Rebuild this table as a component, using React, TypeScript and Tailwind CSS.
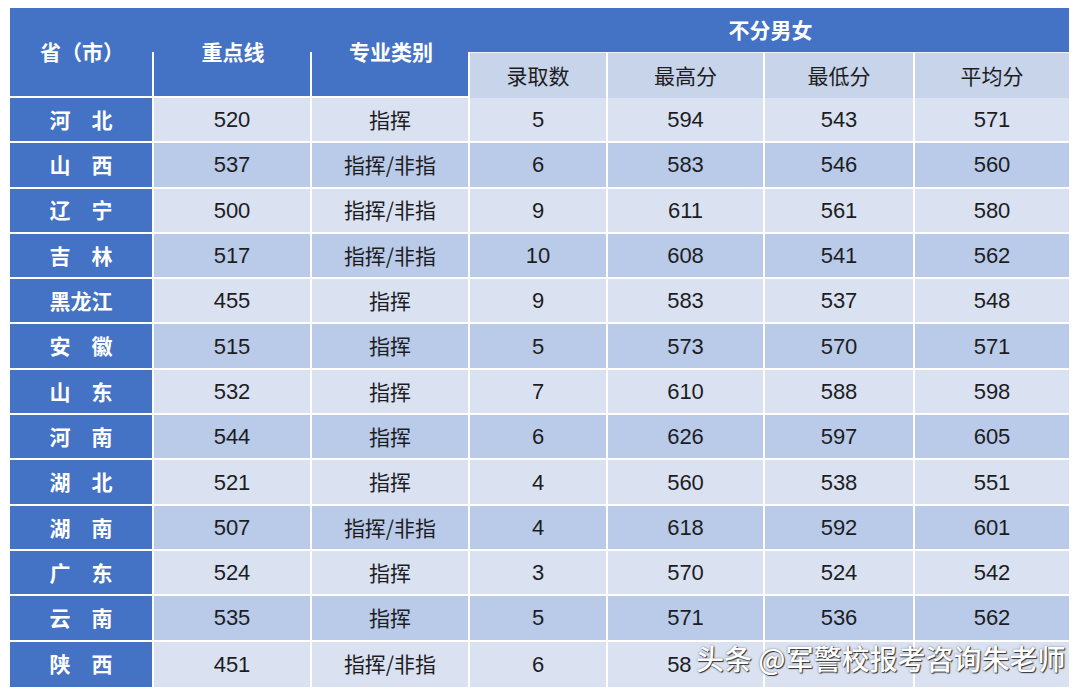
import React from 'react';

const rows: string[][] = [
  ['河　北', '520', '指挥', '5', '594', '543', '571'],
  ['山　西', '537', '指挥/非指', '6', '583', '546', '560'],
  ['辽　宁', '500', '指挥/非指', '9', '611', '561', '580'],
  ['吉　林', '517', '指挥/非指', '10', '608', '541', '562'],
  ['黑龙江', '455', '指挥', '9', '583', '537', '548'],
  ['安　徽', '515', '指挥', '5', '573', '570', '571'],
  ['山　东', '532', '指挥', '7', '610', '588', '598'],
  ['河　南', '544', '指挥', '6', '626', '597', '605'],
  ['湖　北', '521', '指挥', '4', '560', '538', '551'],
  ['湖　南', '507', '指挥/非指', '4', '618', '592', '601'],
  ['广　东', '524', '指挥', '3', '570', '524', '542'],
  ['云　南', '535', '指挥', '5', '571', '536', '562'],
  ['陕　西', '451', '指挥/非指', '6', '58', '', ''],
];

const cols = 'grid grid-cols-[144px_158px_158px_138px_157px_150px_154px]';
const cjk = "font-['Noto_Sans_CJK_SC',sans-serif]";
const num = "font-['Liberation_Sans','Noto_Sans_CJK_SC',sans-serif]";

const HeadCell = ({ label }: { label: string }) => (
  <div className="relative row-span-2 flex items-center justify-center pb-[2px] text-[21px] font-semibold text-white after:absolute after:right-0 after:top-[44px] after:bottom-0 after:w-[2px] after:bg-white">
    {label}
  </div>
);

export default function App() {
  return (
    <div className={`relative h-[697px] w-[1080px] overflow-hidden bg-white pl-[10px] pt-[8px] ${cjk}`}>
      <div className="w-[1059px]">
        {/* Header */}
        <div className={`${cols} h-[90px] grid-rows-[44px_46px] border-b-2 border-white bg-[#4472c4]`}>
          <HeadCell label="省（市）" />
          <HeadCell label="重点线" />
          <HeadCell label="专业类别" />
          <div className="col-span-4 flex items-center justify-center pl-[2px] text-[21px] font-semibold text-white">
            不分男女
          </div>
          {['录取数', '最高分', '最低分', '平均分'].map((h, i) => (
            <div
              key={h}
              className={`flex items-center justify-center border-t border-white/70 bg-[#c8d4ea] text-[21px] text-[#1d1d1f] ${i < 3 ? 'border-r-2 border-r-white' : ''}`}
            >
              {h}
            </div>
          ))}
        </div>

        {/* Body */}
        {rows.map((r, ri) => (
          <div key={ri} className={`${cols} h-[45.3px]`}>
            {r.map((c, ci) => {
              const first = ci === 0;
              const bg = first ? 'bg-[#4472c4]' : ri % 2 === 0 ? 'bg-[#dae2f2]' : 'bg-[#b9cbe8]';
              const border = `${ri < rows.length - 1 ? 'border-b-2' : ''} ${ci < 6 ? 'border-r-2' : ''} border-white`;
              const text = first
                ? 'text-white font-semibold text-[21px]'
                : ci === 2
                ? 'text-[#1d1d1f] text-[21px]'
                : `text-[#1d1d1f] text-[22px] ${num}`;
              return (
                <div key={ci} className={`flex items-center justify-center ${bg} ${border} ${text}`}>
                  {ri === rows.length - 1 && ci === 4 ? (
                    <span>
                      58<span className="invisible">0</span>
                    </span>
                  ) : (
                    c
                  )}
                </div>
              );
            })}
          </div>
        ))}
      </div>

      {/* Watermark */}
      <div className="absolute left-[696px] top-[638px] whitespace-nowrap text-[28px] font-medium leading-[40px] text-white [text-shadow:1px_1px_1px_rgba(0,0,0,0.75),0_0_2px_rgba(0,0,0,0.5)]">
        头条 @军警校报考咨询朱老师
      </div>
    </div>
  );
}
